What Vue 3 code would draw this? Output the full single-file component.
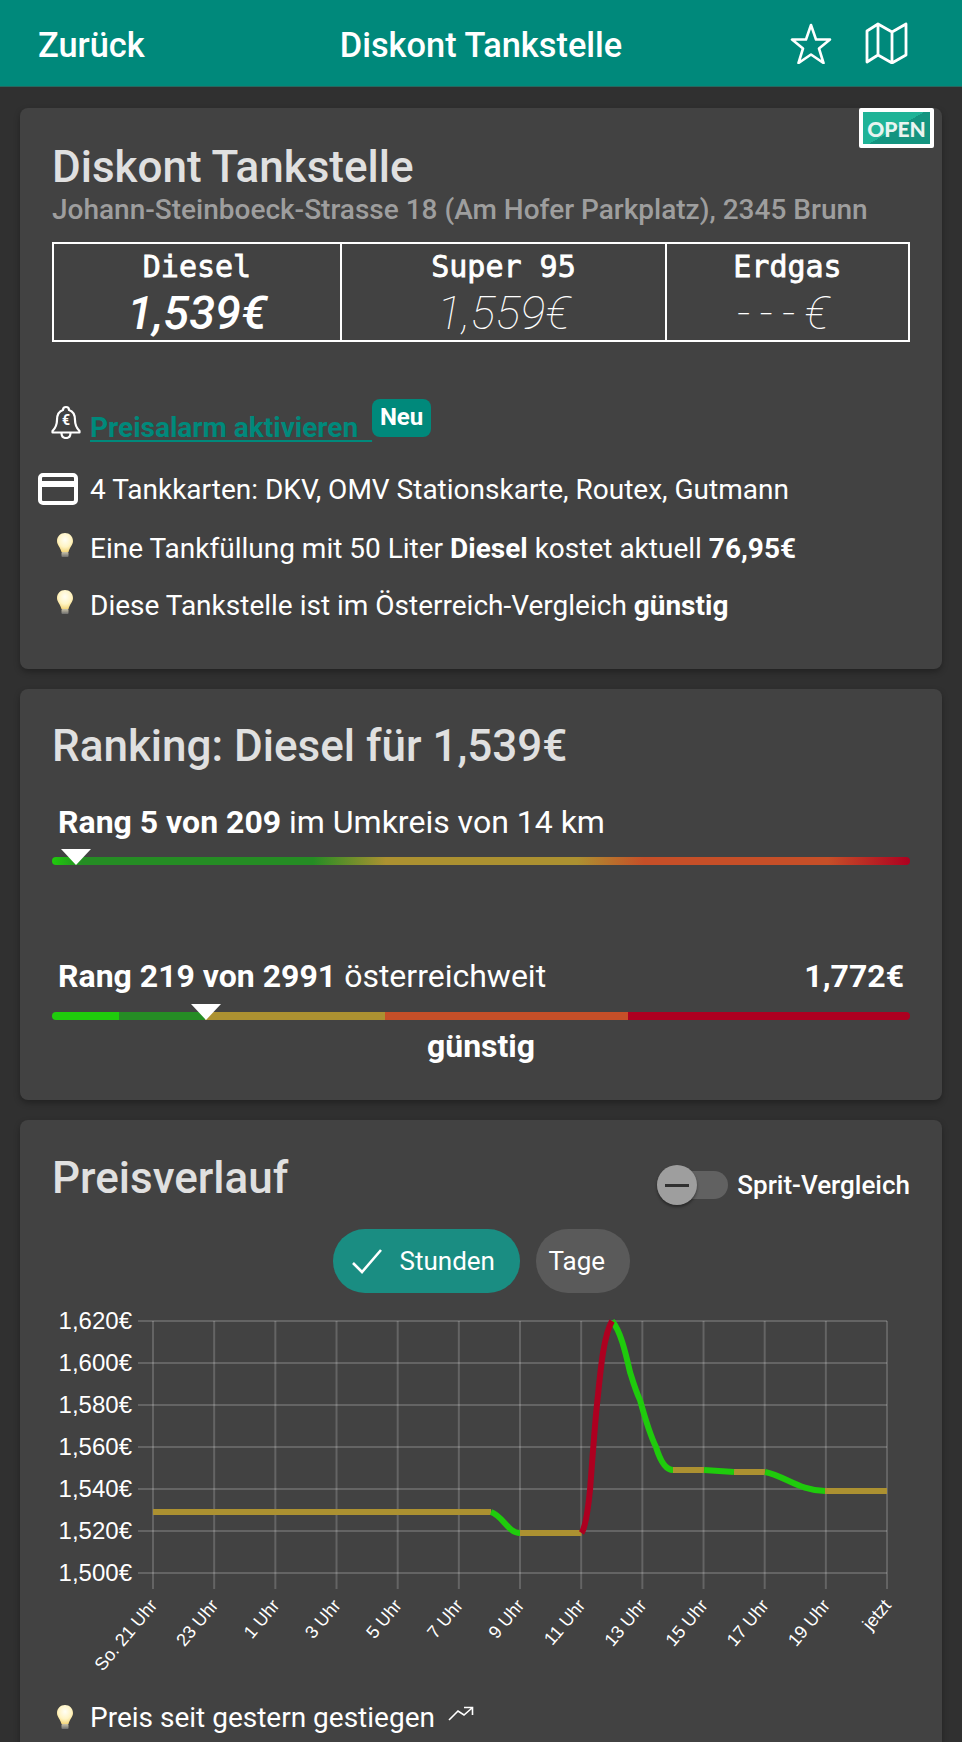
<template>
  <div class="page">
    <header class="topbar">
      <span class="back">Zurück</span>
      <span class="top-title">Diskont Tankstelle</span>
      <div class="top-icons">
        <svg width="44" height="42" viewBox="0 0 44 42" fill="none" stroke="#fff" stroke-width="2.600" stroke-linejoin="round">
          <path d="M23 3l5 14.500h14L31 26.500l4.500 14.500L23 32.500 10.500 41 15 26.500 4 17.500h14z" />
        </svg>
        <svg width="44" height="42" viewBox="0 0 44 42" fill="none" stroke="#fff" stroke-width="2.800" stroke-linejoin="round">
          <path d="M13 2L2 9v31l11-7 14 8 14-8V2L27 10zM13 2v31M27 10v31" />
        </svg>
      </div>
    </header>

    <section class="card first">
      <div class="open-badge"><span>OPEN</span></div>
      <h1 class="title">Diskont Tankstelle</h1>
      <p class="address">Johann-Steinboeck-Strasse 18 (Am Hofer Parkplatz), 2345 Brunn</p>

      <div class="prices">
        <div v-for="p in prices" :key="p.name" class="price-cell" :class="p.cls">
          <div class="fuel">{{ p.name }}</div>
          <div class="lcd" :class="{ best: p.best }">{{ p.value }}</div>
        </div>
      </div>

      <div class="info alarm">
        <span class="ico">
          <svg width="30" height="34" viewBox="0 0 30 34" fill="none" stroke="#fff" stroke-width="2.200" stroke-linejoin="round">
            <path d="M15 2c-2 0-3 1.500-3 3C7 6.500 6 10 6 15c0 5-1.500 8-4.500 11v1.500h27V26C25.500 23 24 20 24 15c0-5-1-8.500-6-10 0-1.500-1-3-3-3z" />
            <path d="M10.500 28c0 3.500 2 5 4.500 5s4.500-1.500 4.500-5" />
            <text x="15" y="20" text-anchor="middle" class="bell-euro">€</text>
          </svg>
        </span>
        <a class="alarm-link">Preisalarm aktivieren&nbsp;&nbsp;</a>
        <span class="neu">Neu</span>
      </div>

      <div class="info cards">
        <span class="ico">
          <svg class="card-ico" width="40" height="32" viewBox="0 0 40 32" fill="none">
            <rect x="2" y="2" width="36" height="28" rx="3" stroke="#fff" stroke-width="4" />
            <rect x="2" y="8" width="36" height="6" fill="#fff" />
          </svg>
        </span>
        <span>4 Tankkarten: DKV, OMV Stationskarte, Routex, Gutmann</span>
      </div>

      <div class="info tip t1">
        <span class="ico">
          <svg width="18" height="26" viewBox="0 0 18 26">
            <use href="#bulb" />
          </svg>
        </span>
        <span>Eine Tankfüllung mit 50 Liter <b>Diesel</b> kostet aktuell <b>76,95€</b></span>
      </div>

      <div class="info tip t2">
        <span class="ico">
          <svg width="18" height="26" viewBox="0 0 18 26">
            <use href="#bulb" />
          </svg>
        </span>
        <span>Diese Tankstelle ist im Österreich-Vergleich <b>günstig</b></span>
      </div>
    </section>

    <section class="card second">
      <h1 class="title">Ranking: Diesel für 1,539€</h1>

      <div class="rank-line"><span><b>Rang 5 von 209</b> im Umkreis von 14 km</span></div>
      <div class="bar gradient">
        <i class="marker" style="left: 9px"></i>
      </div>

      <div class="rank-line lower">
        <span><b>Rang 219 von 2991</b> österreichweit</span>
        <b>1,772€</b>
      </div>
      <div class="bar segments">
        <span v-for="s in segments" :key="s.color" :style="{ width: s.width + 'px', background: s.color }"></span>
        <i class="marker" style="left: 139px"></i>
      </div>
      <div class="rating">günstig</div>
    </section>

    <section class="card third">
      <div class="chart-head">
        <h1 class="title">Preisverlauf</h1>
        <div class="toggle">
          <div class="track"><div class="knob"><span></span></div></div>
          <span class="toggle-label">Sprit-Vergleich</span>
        </div>
      </div>

      <div class="chips">
        <div class="chip on">
          <svg width="32" height="26" viewBox="0 0 32 26" fill="none" stroke="#fff" stroke-width="2.600">
            <path d="M2 15l9 9L30 2" />
          </svg>
          Stunden
        </div>
        <div class="chip off">Tage</div>
      </div>

      <svg class="chart" width="922" height="400" viewBox="20 1300 922 400">
        <g stroke="#fff" stroke-opacity="0.18" stroke-width="2">
          <line v-for="(t, i) in yTicks" :key="t" x1="138" x2="887" :y1="1321 + i * 42" :y2="1321 + i * 42" />
          <line v-for="(l, i) in xLabels" :key="l" :x1="153 + i * 61.17" :x2="153 + i * 61.17" y1="1321" y2="1589" />
        </g>
        <text v-for="(t, i) in yTicks" :key="t" class="y-label" x="132" :y="1329 + i * 42" text-anchor="end">{{ t }}</text>
        <text
          v-for="(l, i) in xLabels"
          :key="l"
          class="x-label"
          text-anchor="end"
          :transform="`translate(${158 + i * 61.17} 1606) rotate(-50)`"
        >{{ l }}</text>
        <g fill="none" stroke-width="6">
          <path v-for="(d, i) in flat" :key="i" :d="d" stroke="#ac9131" />
          <path v-for="(d, i) in falling" :key="i" :d="d" stroke="#1fcb0c" />
          <path :d="rising" stroke="#ad0020" />
        </g>
      </svg>

      <div class="info tip last">
        <span class="ico">
          <svg width="18" height="26" viewBox="0 0 18 26">
            <use href="#bulb" />
          </svg>
        </span>
        <span>Preis seit gestern gestiegen</span>
        <svg class="trend" width="26" height="16" viewBox="0 0 26 16" fill="none" stroke="#fff" stroke-width="1.600">
          <path d="M1 14l9-9 6 4 8-7M16 1.500h8.500V9" />
        </svg>
      </div>
    </section>

    <svg width="0" height="0" class="defs">
      <defs>
        <radialGradient id="glow" cx="50%" cy="35%" r="65%">
          <stop offset="0" stop-color="#fffef5" />
          <stop offset="0.6" stop-color="#fff4c4" />
          <stop offset="1" stop-color="#f4d67c" />
        </radialGradient>
        <linearGradient id="base" x1="0" y1="0" x2="0" y2="1">
          <stop offset="0" stop-color="#c9c2a8" />
          <stop offset="1" stop-color="#6d6d6d" />
        </linearGradient>
        <g id="bulb">
          <path d="M9 1C4.500 1 1 4.500 1 9c0 4 3.500 6.500 4.500 11h7C13.500 15.500 17 13 17 9c0-4.500-3.500-8-8-8z" fill="url(#glow)" />
          <rect x="5.500" y="20" width="7" height="5" rx="1" fill="url(#base)" />
        </g>
      </defs>
    </svg>
  </div>
</template>

<script setup>
const prices = [
  { name: 'Diesel', value: '1,539€', cls: 'c1', best: true },
  { name: 'Super 95', value: '1,559€', cls: 'c2', best: false },
  { name: 'Erdgas', value: '---€', cls: 'c3', best: false }
]

const segments = [
  { width: 67, color: '#1fcb0c' },
  { width: 86, color: '#258c24' },
  { width: 180, color: '#ac9131' },
  { width: 243, color: '#c64f28' },
  { width: 282, color: '#ad0020' }
]

const yTicks = ['1,620€', '1,600€', '1,580€', '1,560€', '1,540€', '1,520€', '1,500€']
const xLabels = ['So. 21 Uhr', '23 Uhr', '1 Uhr', '3 Uhr', '5 Uhr', '7 Uhr', '9 Uhr', '11 Uhr', '13 Uhr', '15 Uhr', '17 Uhr', '19 Uhr', 'jetzt']

// Kurvenstücke in Seitenkoordinaten
const flat = ['M153 1512H491', 'M520 1533H581.500', 'M673 1470H704', 'M734 1472H765', 'M825 1491H887']
const falling = [
  'M491 1512C503 1516 508 1533 520 1533',
  'M612 1321C620 1330 625 1350 630 1372C634 1385 636 1392 640 1400C645 1418 650 1435 656 1447C660 1460 665 1470 673 1470',
  'M704 1470L734 1472',
  'M765 1472C785 1476 800 1491 825 1491'
]
const rising = 'M581.500 1533C585 1528 588 1510 590 1490C592 1465 595 1420 598 1395C601 1365 604 1335 612 1321'
</script>

<style>
html, body {
  background: #303030;
  overflow: hidden;
}
</style>

<style scoped>
.page {
  height: 1742px;
  overflow: hidden;
  background: #303030;
  color: #fff;
  font-family: Roboto, "Liberation Sans", sans-serif;
  font-size: 28px;
}

.topbar {
  height: 87px;
  background: #00897b;
  border-bottom: 1px solid #26685f;
  box-sizing: border-box;
  display: flex;
  align-items: center;
  position: relative;
  padding: 0 53px 0 38px;
  font-size: 34.400px;
  font-weight: 500;
}

.back {
  flex: 1;
  padding-top: 3px;
}

.top-title {
  position: absolute;
  left: 0;
  right: 0;
  padding-top: 3px;
  text-align: center;
}

.top-icons {
  display: flex;
  gap: 33px;
  position: relative;
}

.card {
  position: relative;
  box-sizing: border-box;
  margin: 20px 20px 0;
  background: #424242;
  border-radius: 8px;
  padding: 35px 32px 0;
  box-shadow: 0 3px 6px rgba(0, 0, 0, 0.3);
}

.first {
  height: 561px;
  margin-top: 21px;
}

.second {
  height: 411px;
  padding-top: 33px;
}

.third {
  height: 700px;
  padding-top: 34px;
}

.title {
  margin: 0;
  font-size: 44px;
  line-height: 48px;
  font-weight: 500;
  color: #e0e0e0;
}

.open-badge {
  position: absolute;
  top: 0;
  right: 8px;
  width: 75px;
  height: 40px;
  box-sizing: border-box;
  border: 4px solid #fff;
  border-radius: 2px;
  background: linear-gradient(150deg, #1fb397 50%, #149480 50%);
  display: flex;
  align-items: center;
  justify-content: center;
  font-family: Lato, sans-serif;
  font-weight: 900;
  font-size: 21px;
  color: #e8f4f0;
}

.address {
  margin: 4px 0 0;
  font-size: 28px;
  line-height: 30px;
  font-weight: 500;
  color: #9e9e9e;
}

.prices {
  display: flex;
  margin-top: 17px;
  height: 100px;
  box-sizing: border-box;
  border: 2px solid #fff;
}

.price-cell {
  box-sizing: border-box;
  text-align: center;
  overflow: hidden;
}

.c1 {
  width: 286px;
}

.c2 {
  width: 325px;
  border-left: 2px solid #fff;
}

.c3 {
  flex: 1;
  border-left: 2px solid #fff;
}

.fuel {
  font-family: "DejaVu Sans Mono", monospace;
  font-size: 30px;
  line-height: 36px;
  font-weight: 500;
  margin-top: 5px;
  -webkit-text-stroke: 0.8px #fff;
}

.lcd {
  margin-top: 3px;
  font-family: Roboto, sans-serif;
  font-style: italic;
  font-weight: 100;
  font-size: 47px;
  line-height: 50px;
  letter-spacing: 0;
}

.lcd.best {
  font-weight: 500;
}

.c3 .lcd {
  letter-spacing: 9px;
}

.info {
  position: relative;
  display: flex;
  align-items: baseline;
  margin-left: 38px;
  line-height: 30px;
  white-space: nowrap;
}

.ico {
  position: absolute;
  top: 0;
  right: 100%;
}

.alarm {
  margin-top: 71px;
  font-weight: 700;
}

.alarm .ico {
  top: -8px;
  margin-right: 9px;
}

.alarm-link {
  color: #00897b;
  text-decoration: underline;
  text-decoration-thickness: 2px;
  text-underline-offset: 3px;
}

.neu {
  align-self: flex-start;
  margin-top: -14px;
  width: 59px;
  height: 38px;
  line-height: 36px;
  text-align: center;
  background: #00897b;
  border-radius: 8px;
  font-size: 24px;
}

.cards {
  margin-top: 32px;
}

.cards .ico {
  top: -2px;
  margin-right: 12px;
}

.card-ico {
  display: block;
}

.t1 {
  margin-top: 29px;
}

.t2 {
  margin-top: 27px;
}

.tip .ico {
  top: -2px;
  margin-right: 16px;
}

.rank-line {
  display: flex;
  justify-content: space-between;
  padding: 0 6px;
  margin-top: 35px;
  line-height: 34px;
  font-size: 32px;
}

.rank-line.lower {
  margin-top: 94px;
}

.bar {
  position: relative;
  height: 8px;
  margin-top: 18px;
  border-radius: 4px;
}

.segments.bar {
  margin-top: 19px;
}

.gradient {
  background: linear-gradient(
    90deg,
    #1fcb0c 0,
    #258c24 30px,
    #258c24 261px,
    #ac9131 334px,
    #ac9131 525px,
    #c64f28 592px,
    #c64f28 776px,
    #ad0020 100%
  );
}

.segments {
  display: flex;
  overflow: visible;
}

.segments span:first-child {
  border-radius: 4px 0 0 4px;
}

.segments span:nth-child(5) {
  border-radius: 0 4px 4px 0;
}

.marker {
  position: absolute;
  bottom: 0;
  width: 0;
  height: 0;
  border-left: 15px solid transparent;
  border-right: 15px solid transparent;
  border-top: 16px solid #fff;
}

.rating {
  margin-top: 9px;
  text-align: center;
  font-weight: 700;
  font-size: 32px;
  line-height: 34px;
}

.chart-head {
  display: flex;
  justify-content: space-between;
}

.toggle {
  display: flex;
  align-items: center;
  margin-top: 11px;
  height: 40px;
}

.track {
  position: relative;
  width: 71px;
  height: 28px;
  background: #616161;
  border-radius: 14px;
}

.knob {
  position: absolute;
  top: -6px;
  left: 0;
  width: 40px;
  height: 40px;
  border-radius: 50%;
  background: #9e9e9e;
  box-shadow: 0 2px 3px rgba(0, 0, 0, 0.4);
  display: flex;
  align-items: center;
  justify-content: center;
}

.knob span {
  width: 24px;
  height: 3px;
  background: #303030;
}

.toggle-label {
  margin-left: 9px;
  font-size: 26px;
  font-weight: 500;
}

.chips {
  display: flex;
  justify-content: center;
  gap: 16px;
  margin-top: 24px;
}

.chip {
  height: 64px;
  border-radius: 32px;
  display: flex;
  align-items: center;
  font-size: 26px;
  box-sizing: border-box;
}

.chip.on {
  width: 187px;
  background: #1a8d82;
  gap: 17px;
  padding-left: 18px;
}

.chip.off {
  width: 94px;
  background: #5a5a5a;
  padding-left: 13px;
}

.chart {
  display: block;
  margin: 7px -32px 0;
}

.y-label {
  font-family: "Liberation Sans", sans-serif;
  font-size: 24px;
  fill: #fff;
}

.x-label {
  font-family: "Liberation Sans", sans-serif;
  font-size: 18px;
  fill: #fff;
}

.bell-euro {
  font-family: Roboto, sans-serif;
  font-size: 14px;
  font-weight: 700;
  fill: #fff;
  stroke: none;
}

.last {
  margin-top: 3px;
}

.last .ico {
  top: 1px;
}

.trend {
  align-self: flex-start;
  margin: 3px 0 0 13px;
}

.defs {
  position: absolute;
}
</style>
